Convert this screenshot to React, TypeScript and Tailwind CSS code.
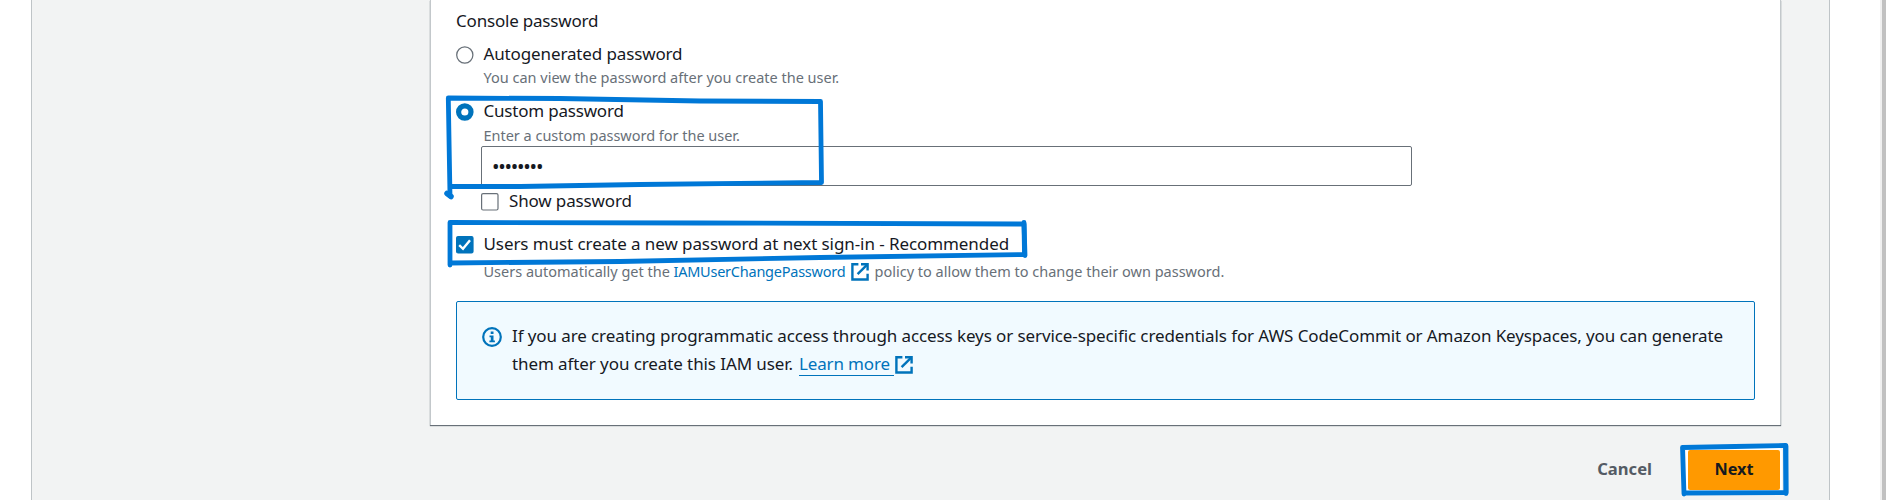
import React from "react";

function ExternalIcon({ className }: { className: string }) {
  return (
    <svg viewBox="0 0 18 18" className={className} fill="none" stroke="#0073bb" strokeWidth="2.4">
      <path d="M7.4 1.3H1.4v15.200h15.200V10.800" />
      <path d="M10 1.300H16.600v6.200" />
      <path d="M16.200 1.700L6.600 11.200" />
    </svg>
  );
}

function Radio({ checked }: { checked?: boolean }) {
  return (
    <svg viewBox="0 0 18 18" className="size-[18px] shrink-0">
      {checked ? (
        <circle cx="8.8" cy="9" r="6.2" fill="#fff" stroke="#0073bb" strokeWidth="5.2" />
      ) : (
        <circle cx="8.800" cy="9" r="8.1" fill="#fff" stroke="#687078" strokeWidth="1.25" />
      )}
    </svg>
  );
}

function Checkbox({ checked }: { checked?: boolean }) {
  return (
    <svg viewBox="0 0 18 18" className="size-[18px] shrink-0">
      <rect
        x="0.6" y="0.6" width="16.4" height="16.4" rx="1.5"
        fill={checked ? "#0073bb" : "#fff"}
        stroke={checked ? "#0073bb" : "#687078"}
        strokeWidth="1.2"
      />
      {checked && <path d="M3.2 9.2L7 12.8L14 4.2" fill="none" stroke="#fff" strokeWidth="2.4" />}
    </svg>
  );
}

export default function App() {
  return (
    <div className="relative flex h-[500px] w-[1886px] overflow-hidden bg-white font-['Noto_Sans','Open_Sans',sans-serif] text-[17px] leading-[22px] text-[#16191f]">
      <div className="w-[31px] shrink-0" />
      <main className="flex w-[1799px] shrink-0 flex-col border-x border-[#bfc4c7] bg-[#f2f3f3] pl-[398px]">
        <section className="h-[425px] w-[1351px] shrink-0 border-r border-l border-[#c3c8cb] bg-white pt-[10px] pl-[25px] shadow-[0_1px_1px_0_#687078]">
          <h2 className="tracking-[-0.2px]">Console password</h2>

          <label className="mt-[11px] flex gap-[9.5px]">
            <span className="pt-[3px]"><Radio /></span>
            <span>
              <span className="block tracking-[-0.13px]">Autogenerated password</span>
              <span className="mt-[2px] block text-[14.5px] leading-[20px] text-[#687078]">You can view the password after you create the user.</span>
            </span>
          </label>

          <label className="mt-[13px] flex gap-[9.5px]">
            <span className="pt-[3px]"><Radio checked /></span>
            <span>
              <span className="block tracking-[-0.2px]">Custom password</span>
              <span className="mt-[3px] block text-[14.5px] leading-[20px] tracking-[-0.02px] text-[#687078]">Enter a custom password for the user.</span>
            </span>
          </label>

          <div className="mt-[1px] ml-[25px] flex h-[40px] w-[931px] items-center rounded-[2px] border border-[#687078] bg-white pl-[10px]">
            <span className="pt-[1px] text-[20px] tracking-[-1.25px]">••••••••</span>
          </div>

          <label className="mt-[4px] ml-[25px] flex gap-[10px]">
            <span className="pt-[3px]"><Checkbox /></span>
            <span className="tracking-[-0.14px]">Show password</span>
          </label>

          <label className="mt-[21px] flex gap-[9.5px]">
            <span className="pt-[3px]"><Checkbox checked /></span>
            <span className="tracking-[-0.08px]">Users must create a new password at next sign-in - Recommended</span>
          </label>
          <p className="mt-[6px] ml-[27.5px] flex h-[20px] items-center text-[14.5px] leading-[20px] whitespace-nowrap text-[#687078]">
            <span className="w-[190px]">Users automatically get the</span>
            <a className="w-[177px] tracking-[-0.24px] text-[#0073bb]">IAMUserChangePassword</a>
            <ExternalIcon className="mt-[2px] size-[18px]" />
            <span className="ml-[6px]">policy to allow them to change their own password.</span>
          </p>

          <div className="mt-[20px] flex h-[99px] w-[1299px] rounded-[2px] border border-[#0073bb] bg-[#f1faff] pt-[22px] pl-[25px]">
            <svg viewBox="0 0 20 20" className="mt-[3px] size-[20px] shrink-0">
              <circle cx="10" cy="10" r="8.8" fill="none" stroke="#0073bb" strokeWidth="2.2" />
              <path d="M8.7 4.6h2.8v2.4H8.7zM7.5 8.4h4v5h1.4v1.8H7.4v-1.8h1.4v-3.2H7.5z" fill="#0073bb" />
            </svg>
            <div className="ml-[10px] leading-[28px] whitespace-nowrap">
              <p className="mt-[-2px] tracking-[-0.098px]">If you are creating programmatic access through access keys or service-specific credentials for AWS CodeCommit or Amazon Keyspaces, you can generate</p>
              <p className="flex">
                <span className="w-[287px] tracking-[-0.09px]">them after you create this IAM user.</span>
                <a className="mt-[3px] h-[23px] w-[95px] border-b border-[#0073bb] leading-[22px] tracking-[-0.15px] text-[#0073bb]">Learn more</a>
                <ExternalIcon className="mt-[6px] ml-[1px] size-[18px]" />
              </p>
            </div>
          </div>
        </section>

        <footer className="mt-[25px] flex h-[40px] w-[1350px] items-center justify-end font-bold">
          <span className="mr-[36px] pb-[2px] text-[16.6px] text-[#545b64]">Cancel</span>
          <button className="h-[40px] w-[92px] rounded-[2px] bg-[#ff9900] pb-[2px] text-[16.3px] text-[#16191f] shadow-[0_0_0_2px_#fff]">Next</button>
        </footer>
      </main>
      <div className="w-[50px] shrink-0" />
      <div className="w-[2px] shrink-0 bg-[#f0f0f0]" />
      <div className="w-[4px] shrink-0 bg-[#c1c1c1]" />

      <svg viewBox="0 0 1886 500" className="pointer-events-none absolute inset-0 h-[500px] w-[1886px]" fill="none" stroke="#0078d7" strokeWidth="4.8" strokeLinecap="round" strokeLinejoin="round">
        <path d="M450 196L448.300 98L560 98.500L700 101L820.500 101.500L821.500 182.500L640 184.500L520 186.500L450 186.500" />
        <path d="M447 193.500L451 196.500" strokeWidth="5.5" />
        <path d="M450 265L450 222.500L700 223L1024 224L1024.500 254.500L820 257.500L620 261.500L450 263" />
        <path d="M1024 222.500L1025 255.500" />
        <path d="M1684 494L1682.500 447.500L1735 446.500L1785.500 445.500L1786 492.500L1684 493" />
        <path d="M1786 446L1786 493.500" />
      </svg>
    </div>
  );
}
